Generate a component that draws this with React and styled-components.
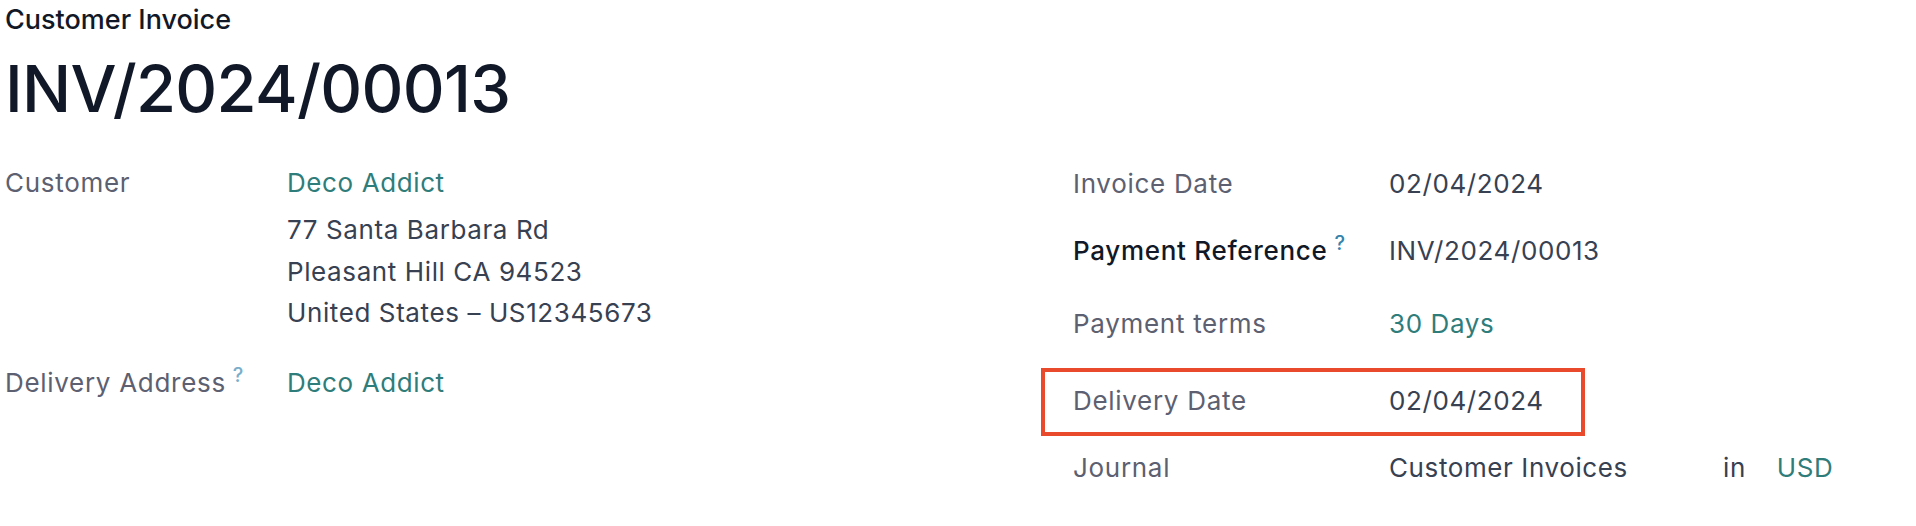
import React from "react";
import styled, { createGlobalStyle } from "styled-components";

const GlobalStyle = createGlobalStyle`
  body {
    margin: 0;
    background: #ffffff;
    font-family: Inter, "Noto Sans", sans-serif;
  }
`;

const Page = styled.div`
  padding: 0 0 0 5px;
  width: 1911px;
`;

const Kind = styled.div`
  font-size: 27px;
  line-height: 40px;
  font-weight: 500;
  color: #111827;
`;

const Title = styled.h1`
  margin: 9px 0 0;
  font-size: 65px;
  letter-spacing: -0.7px;
  line-height: 80px;
  font-weight: 500;
  color: #111827;
`;

const Groups = styled.div`
  display: grid;
  grid-template-columns: 1036px 1fr;
  margin-top: 21px;
`;

const LeftGroup = styled.div`
  display: flex;
  flex-direction: column;
`;

const LeftRow = styled.div`
  display: grid;
  grid-template-columns: 282px 1fr;
  padding-top: ${(p) => p.$top}px;
`;

const Label = styled.div`
  font-size: 26px;
  letter-spacing: 0.7px;
  line-height: 41px;
  font-weight: ${(p) => (p.$strong ? 500 : 400)};
  color: ${(p) => (p.$strong ? "#111827" : "#5c6070")};
  white-space: nowrap;
`;

const Tip = styled.sup`
  font-size: 20px;
  font-weight: 500;
  line-height: 1;
  margin-left: 7px;
  vertical-align: 10px;
  color: ${(p) => (p.$muted ? "#78aecb" : "#3384ad")};
`;

const Value = styled.div`
  font-size: 26px;
  letter-spacing: 0.6px;
  line-height: 41px;
  color: #374151;
  white-space: nowrap;
`;

const Link = styled.span`
  color: #2f7d7b;
`;

const Address = styled.div`
  margin-top: 6px;
  line-height: 41.5px;
`;

const RightGroup = styled.div`
  display: flex;
  flex-direction: column;
`;

const RightRow = styled.div`
  position: relative;
  display: grid;
  grid-template-columns: 316px 1fr;
  align-items: center;
  height: ${(p) => p.$h}px;
  padding-left: 32px;
  padding-top: ${(p) => p.$shift || 0}px;
  box-sizing: border-box;
`;

const Highlight = styled.div`
  position: absolute;
  left: 0;
  top: 6px;
  bottom: 0;
  width: 544px;
  border: 4px solid #e94a2b;
  box-sizing: border-box;
  pointer-events: none;
`;

const Journal = styled.div`
  display: flex;
  align-items: center;
`;

const JournalName = styled.span`
  width: 334px;
`;

const Currency = styled(Link)`
  margin-left: 31px;
`;

const rightRows = [
  { label: "Invoice Date", value: "02/04/2024", h: 66 },
  { label: "Payment Reference", value: "INV/2024/00013", h: 68, strong: true, tip: true },
  { label: "Payment terms", value: <Link>30 Days</Link>, h: 78 },
  { label: "Delivery Date", value: "02/04/2024", h: 74, shift: 2, marked: true },
  {
    label: "Journal",
    h: 62,
    value: (
      <Journal>
        <JournalName>Customer Invoices</JournalName>
        <span>in</span>
        <Currency>USD</Currency>
      </Journal>
    ),
  },
];

export default function App() {
  return (
    <Page>
      <GlobalStyle />
      <Kind>Customer Invoice</Kind>
      <Title>INV/2024/00013</Title>
      <Groups>
        <LeftGroup>
          <LeftRow $top={12}>
            <Label>Customer</Label>
            <Value>
              <Link>Deco Addict</Link>
              <Address>
                77 Santa Barbara Rd
                <br />
                Pleasant Hill CA 94523
                <br />
                United States – US12345673
              </Address>
            </Value>
          </LeftRow>
          <LeftRow $top={28}>
            <Label>
              Delivery Address<Tip $muted>?</Tip>
            </Label>
            <Value>
              <Link>Deco Addict</Link>
            </Value>
          </LeftRow>
        </LeftGroup>
        <RightGroup>
          {rightRows.map((r) => (
            <RightRow key={r.label} $h={r.h} $shift={r.shift}>
              {r.marked && <Highlight />}
              <Label $strong={r.strong}>
                {r.label}
                {r.tip && <Tip>?</Tip>}
              </Label>
              <Value>{r.value}</Value>
            </RightRow>
          ))}
        </RightGroup>
      </Groups>
    </Page>
  );
}
